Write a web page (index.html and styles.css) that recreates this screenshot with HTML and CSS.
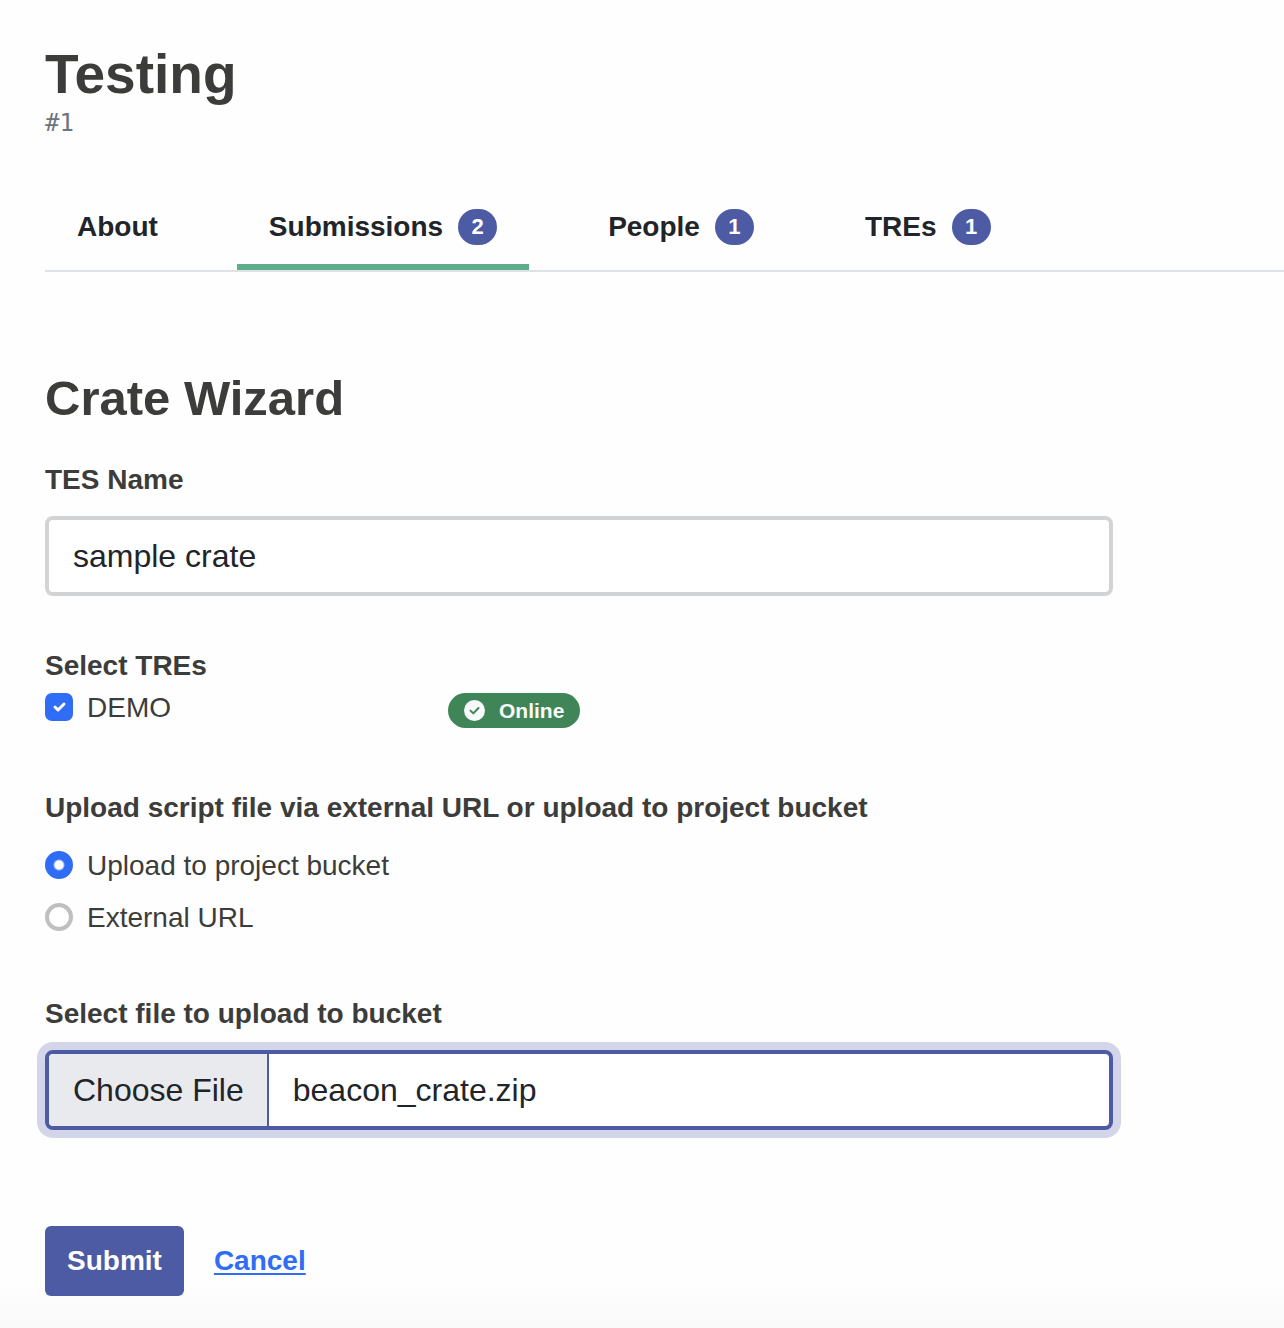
FILE: index.html
```html
<!DOCTYPE html>
<html lang="en">
<head>
  <meta charset="utf-8">
  <meta name="viewport" content="width=device-width, initial-scale=1">
  <title>Testing - Crate Wizard</title>
  <link rel="stylesheet" href="styles.css">
</head>
<body>
  <main class="page">
    <header>
      <h1 class="page-title">Testing</h1>
      <div class="page-id">#1</div>
    </header>

    <nav class="tabs">
      <a class="tab" href="#about">About</a>
      <a class="tab tab-active" href="#submissions" aria-current="page">Submissions <span class="count">2</span></a>
      <a class="tab" href="#people">People <span class="count">1</span></a>
      <a class="tab" href="#tres">TREs <span class="count">1</span></a>
    </nav>

    <h2 class="section-title">Crate Wizard</h2>

    <form class="wizard">
      <div class="group">
        <label class="label" for="tes-name">TES Name</label>
        <input class="control" id="tes-name" type="text" value="sample crate">
      </div>

      <fieldset class="group-tres">
        <legend class="label">Select TREs</legend>
        <div class="tre-row">
          <label class="choice"><input class="check" type="checkbox" checked>DEMO</label>
          <span class="status">
            <svg class="status-icon" viewBox="0 0 21 21" aria-hidden="true">
              <circle cx="10.5" cy="10.5" r="10.5" fill="#f8f9fa"/>
              <path d="M6.5 10.6l2.8 2.8 5.2-5.4" fill="none" stroke="#408558" stroke-width="2" stroke-linecap="round" stroke-linejoin="round"/>
            </svg>
            Online
          </span>
        </div>
      </fieldset>

      <fieldset class="group-source">
        <legend class="label">Upload script file via external URL or upload to project bucket</legend>
        <div class="choices">
          <label class="choice"><input class="radio" type="radio" name="source" checked>Upload to project bucket</label>
          <label class="choice"><input class="radio" type="radio" name="source">External URL</label>
        </div>
      </fieldset>

      <div class="group">
        <label class="label" for="crate-file">Select file to upload to bucket</label>
        <input class="control file" id="crate-file" type="file">
      </div>

      <div class="actions">
        <button class="submit" type="submit">Submit</button>
        <a class="cancel" href="#submissions">Cancel</a>
      </div>
    </form>
  </main>
  <script src="script.js"></script>
</body>
</html>
```
FILE: styles.css
```css
* {
  box-sizing: border-box;
}

body {
  margin: 0;
  min-height: 100vh;
  background: #fefefe linear-gradient(#fefefe, #f9f9f9) bottom / 100% 40px no-repeat;
  color: #3c3c3b;
  font-family: "Liberation Sans", Helvetica, Arial, sans-serif;
  font-size: 28px;
  line-height: 40px;
}

.page {
  padding: 42px 0 32px 45px;
}

.page-title {
  margin: 0;
  font-size: 55px;
  line-height: 64px;
}

.page-id {
  color: #6c757d;
  font-family: "DejaVu Sans Mono", monospace;
  font-size: 24px;
  line-height: 34px;
}

.tabs {
  display: flex;
  gap: 47px;
  margin-top: 44px;
  border-bottom: 2px solid #dee2e6;
}

.tab {
  display: flex;
  align-items: center;
  gap: 15px;
  padding: 23px 32px 17px;
  border-bottom: 6px solid transparent;
  color: #212529;
  font-weight: 700;
  text-decoration: none;
}

.tab-active {
  border-bottom-color: #5fae8b;
}

.count {
  min-width: 39px;
  border-radius: 18px;
  background: #4c5ba3;
  color: #fff;
  font-size: 22px;
  line-height: 36px;
  text-align: center;
}

.section-title {
  margin: 98px 0 34px;
  font-size: 49px;
  line-height: 56px;
}

.wizard {
  max-width: 1068px;
}

.label {
  display: block;
  padding: 0;
  font-weight: 700;
}

.control {
  display: block;
  width: 100%;
  height: 80px;
  margin-top: 16px;
  padding: 0 24px;
  border: 4px solid #d1d3d5;
  border-radius: 8px;
  outline: none;
  background: #fff;
  color: #212529;
  font: inherit;
  font-size: 32px;
}

fieldset {
  min-width: 0;
  margin: 0;
  padding: 0;
  border: 0;
}

.group-tres {
  margin-top: 50px;
}

.tre-row {
  display: grid;
  grid-template-columns: 403px auto;
  align-items: end;
  justify-content: start;
  padding-top: 2px;
}

.choice {
  display: flex;
  align-items: center;
  gap: 14px;
}

.check,
.radio {
  appearance: none;
  width: 28px;
  height: 28px;
  margin: 0 0 2px;
  border: 4px solid #bfbfbf;
  background: #fff center no-repeat;
}

.check {
  border-radius: 7px;
}

.radio {
  border-radius: 50%;
}

.check:checked,
.radio:checked {
  border-color: #2f6df6;
  background-color: #2f6df6;
}

.check:checked {
  background-image: url("data:image/svg+xml,%3Csvg xmlns='http://www.w3.org/2000/svg' viewBox='0 0 20 20'%3E%3Cpath fill='none' stroke='%23fff' stroke-linecap='round' stroke-linejoin='round' stroke-width='3' d='m6 10 3 3 6-6'/%3E%3C/svg%3E");
}

.radio:checked {
  background-image: radial-gradient(circle, #fff 4px, transparent 6px);
}

.status {
  display: flex;
  align-items: center;
  gap: 14px;
  padding: 0 16px;
  border-radius: 18px;
  background: #408558;
  color: #f8f9fa;
  font-size: 21px;
  font-weight: 700;
  line-height: 35px;
}

.status-icon {
  width: 21px;
  height: 21px;
}

.group-source {
  margin-top: 60px;
}

.choices {
  display: grid;
  gap: 12px;
  padding: 18px 0 56px;
}

.file {
  padding: 0;
  border-color: #4c5ba3;
  box-shadow: 0 0 0 8px #d2d6e8;
  line-height: 72px;
}

.file::file-selector-button {
  height: 72px;
  margin: 0 24px 0 0;
  padding: 0 23px 0 24px;
  border: 0;
  border-right: 2px solid #4c5ba3;
  border-radius: 4px 0 0 4px;
  background: #e9eaee;
  color: #212529;
  font: inherit;
}

.actions {
  display: flex;
  align-items: center;
  gap: 30px;
  margin-top: 96px;
}

.submit {
  height: 70px;
  padding: 0 22px;
  border: 0;
  border-radius: 6px;
  background: #4c5ba3;
  color: #fff;
  font: inherit;
  font-weight: 700;
}

.cancel {
  color: #2f6df6;
  font-weight: 700;
  text-underline-offset: 3px;
  text-decoration-thickness: 2px;
}
```
FILE: script.js
```js
const selection = new DataTransfer();
selection.items.add(new File([""], "beacon_crate.zip", { type: "application/zip" }));
document.getElementById("crate-file").files = selection.files;
```
